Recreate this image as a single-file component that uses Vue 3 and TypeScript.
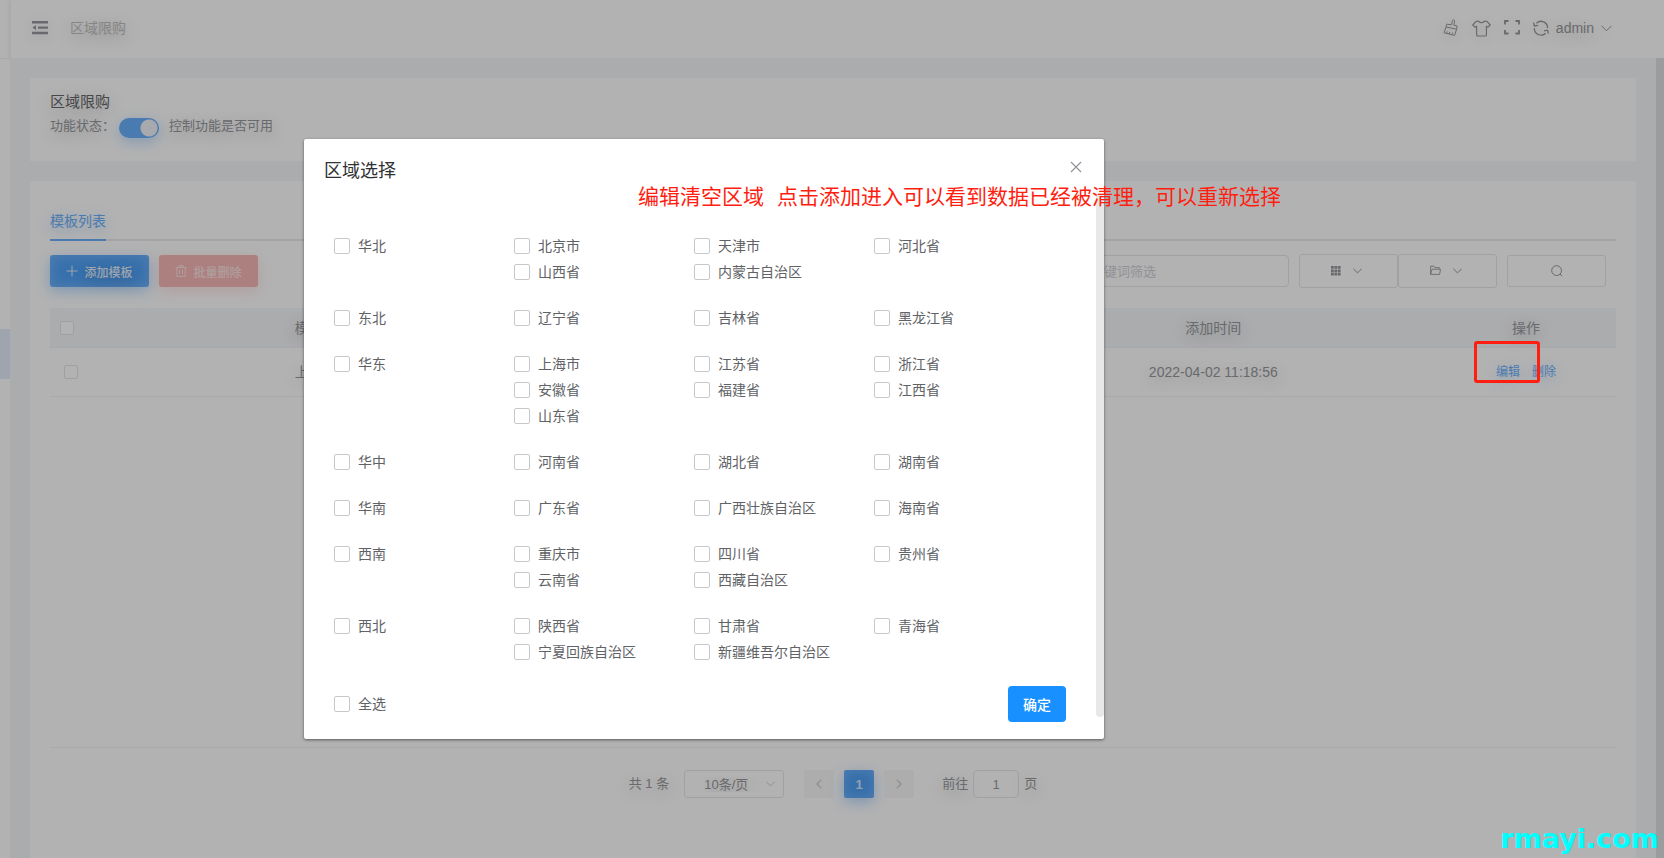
<script setup lang="ts">
import { ref } from 'vue'

interface Region {
  name: string
  provinces: string[]
}

const regions: Region[] = [
  { name: '华北', provinces: ['北京市', '天津市', '河北省', '山西省', '内蒙古自治区'] },
  { name: '东北', provinces: ['辽宁省', '吉林省', '黑龙江省'] },
  { name: '华东', provinces: ['上海市', '江苏省', '浙江省', '安徽省', '福建省', '江西省', '山东省'] },
  { name: '华中', provinces: ['河南省', '湖北省', '湖南省'] },
  { name: '华南', provinces: ['广东省', '广西壮族自治区', '海南省'] },
  { name: '西南', provinces: ['重庆市', '四川省', '贵州省', '云南省', '西藏自治区'] },
  { name: '西北', provinces: ['陕西省', '甘肃省', '青海省', '宁夏回族自治区', '新疆维吾尔自治区'] },
]

const selected = ref<string[]>([])
const enabled = ref(true)
const keyword = ref('')
const pageSize = ref('10')
const jumpTo = ref('1')
</script>

<template>
  <div class="app">
    <aside class="sidebar">
      <div class="sidebar-logo"></div>
      <div class="sidebar-active"></div>
    </aside>

    <div class="shell">
      <header class="topbar">
        <button class="plain" aria-label="折叠菜单">
          <svg width="16" height="14" viewBox="0 0 16 14" fill="currentColor">
            <path d="M0 0h16v2.4H0zM6 5.4h10v2.4H6zM0 10.8h16v2.4H0zM0.4 6.6L4 4.2v4.8z" />
          </svg>
        </button>
        <span class="crumb">区域限购</span>
        <div class="tools">
          <button class="plain" aria-label="清除缓存">
            <svg width="16" height="18" viewBox="0 0 16 18" fill="none" stroke="currentColor" stroke-width="1" stroke-linejoin="round">
              <path d="M8.6 5.8L9.4 1.6Q9.8.6 10.8.9T11.6 2.2L10.8 6.2L14.2 7L13.6 10.2L3 8L3.8 5.2L8.6 5.8M3 8L1 13.8L11.6 16.4L13.6 10.2M3.6 14.4L4.2 12.4M6.2 15L6.8 13M9 15.6L9.6 13.6" />
            </svg>
          </button>
          <button class="plain" aria-label="主题">
            <svg width="19" height="17" viewBox="0 0 19 17" fill="none" stroke="currentColor" stroke-width="1.2" stroke-linejoin="round">
              <path d="M6.2 1Q9.5 4.4 12.8 1L15.2 1.6L18.2 5L16 7.2L14.4 6.2V15Q14.4 16 13.4 16H5.6Q4.6 16 4.6 15V6.2L3 7.2L.8 5L3.8 1.6Z" />
            </svg>
          </button>
          <button class="plain" aria-label="全屏">
            <svg width="16" height="16" viewBox="0 0 16 16" fill="none" stroke="currentColor" stroke-width="1.8">
              <path d="M1 4.5V1H4.5M11.5 1H15V4.5M15 10V13.5H11.5M4.5 13.5H1V10" />
            </svg>
          </button>
          <button class="plain" aria-label="刷新">
            <svg width="16" height="16" viewBox="0 0 16 16" fill="none" stroke="currentColor" stroke-width="1.3">
              <path d="M3.4 3.2A6.6 6.6 0 0 1 14.6 8M12.6 13.2A6.6 6.6 0 0 1 1.4 8" />
              <path d="M.6 2.6L1.4 6L5 5.4M15.4 13.6L14.6 10.2L11 10.8" />
            </svg>
          </button>
          <button class="plain user">
            admin
            <svg width="11" height="7" viewBox="0 0 11 7" fill="none" stroke="currentColor"><path d="M.5.8L5.5 5.8L10.5.8" /></svg>
          </button>
        </div>
      </header>

      <main class="content">
        <section class="card status-card">
          <h1>区域限购</h1>
          <div class="status">
            <label for="feature">功能状态：</label>
            <input id="feature" v-model="enabled" class="switch" type="checkbox" role="switch" />
            <span class="hint">控制功能是否可用</span>
          </div>
        </section>

        <section class="card list-card">
          <nav class="tabs"><a class="tab" href="#list">模板列表</a></nav>

          <div class="toolbar">
            <button class="btn primary">
              <svg width="12" height="12" viewBox="0 0 12 12" fill="none" stroke="currentColor"><path d="M6 .5V11.5M.5 6H11.5" /></svg>
              添加模板
            </button>
            <button class="btn danger">
              <svg width="12" height="12" viewBox="0 0 12 12" fill="none" stroke="currentColor"><path d="M.5 2.5H11.5M4 2.5V.7H8V2.5M1.8 2.5V11.3H10.2V2.5M4.5 4.8V9M7.5 4.8V9" /></svg>
              批量删除
            </button>
            <div class="filters">
              <input v-model="keyword" class="search" type="text" placeholder="关键词筛选" aria-label="关键词筛选" />
              <div class="pair">
                <button class="ghost tall" aria-label="列设置">
                  <svg width="10" height="10" viewBox="0 0 10 10" fill="currentColor">
                    <path d="M0 0h2.8v2.8H0zM3.4 0h2.8v2.8H3.4zM6.8 0h2.8v2.8H6.8zM0 3.4h2.8v2.8H0zM3.4 3.4h2.8v2.8H3.4zM6.8 3.4h2.8v2.8H6.8zM0 6.8h2.8v2.8H0zM3.4 6.8h2.8v2.8H3.4zM6.8 6.8h2.8v2.8H6.8z" />
                  </svg>
                  <svg width="9" height="6" viewBox="0 0 9 6" fill="none" stroke="currentColor"><path d="M.4.8L4.5 4.9L8.6.8" /></svg>
                </button>
                <button class="ghost tall" aria-label="导出">
                  <svg width="11" height="12" viewBox="0 0 11 12" fill="none" stroke="currentColor" stroke-width=".9"><path d="M.6 9.4V1.2H4L5 2.6H9.2V4.2M.6 9.4L2 4.2H10.5L9.6 9.4Z" /></svg>
                  <svg width="9" height="6" viewBox="0 0 9 6" fill="none" stroke="currentColor"><path d="M.4.8L4.5 4.9L8.6.8" /></svg>
                </button>
              </div>
              <button class="ghost" aria-label="搜索">
                <svg width="12" height="12" viewBox="0 0 12 12" fill="none" stroke="currentColor"><circle cx="5.6" cy="5.6" r="4.9" /><path d="M9 9L11 11.2" /></svg>
              </button>
            </div>
          </div>

          <div class="table-area">
            <table>
              <colgroup>
                <col class="col-check" />
                <col />
                <col />
                <col />
                <col class="col-actions" />
              </colgroup>
              <thead>
                <tr>
                  <th class="check-cell"><input type="checkbox" class="box small" aria-label="选择全部" /></th>
                  <th>模板名称</th>
                  <th></th>
                  <th>添加时间</th>
                  <th>操作</th>
                </tr>
              </thead>
              <tbody>
                <tr>
                  <td class="check-cell row-check"><input type="checkbox" class="box small" aria-label="选择此行" /></td>
                  <td>上海模板</td>
                  <td></td>
                  <td>2022-04-02 11:18:56</td>
                  <td>
                    <div class="actions"><a href="#edit">编辑</a><a href="#delete">删除</a></div>
                  </td>
                </tr>
              </tbody>
            </table>
          </div>

          <footer class="pagination">
            <span class="total">共 1 条</span>
            <span class="size">
              <select v-model="pageSize" aria-label="每页条数">
                <option value="10">10条/页</option>
              </select>
              <svg width="9" height="6" viewBox="0 0 9 6" fill="none" stroke="currentColor"><path d="M.4.8L4.5 4.9L8.6.8" /></svg>
            </span>
            <div class="pager">
              <button aria-label="上一页">
                <svg width="6" height="10" viewBox="0 0 6 10" fill="none" stroke="currentColor" stroke-width="1.5"><path d="M5.2.8L1 5L5.2 9.2" /></svg>
              </button>
              <button class="current">1</button>
              <button aria-label="下一页">
                <svg width="6" height="10" viewBox="0 0 6 10" fill="none" stroke="currentColor" stroke-width="1.5"><path d="M.8.8L5 5L.8 9.2" /></svg>
              </button>
            </div>
            <label class="jump">前往<input v-model="jumpTo" type="text" />页</label>
          </footer>
        </section>
      </main>
      <div class="page-scroll"></div>
    </div>

    <div class="mask"></div>

    <div class="dialog" role="dialog" aria-labelledby="dialog-title">
      <header class="dialog-head">
        <h2 id="dialog-title">区域选择</h2>
        <button class="close" aria-label="关闭">
          <svg width="12" height="12" viewBox="0 0 12 12" fill="none" stroke="currentColor" stroke-width="1.2"><path d="M1 1L11 11M11 1L1 11" /></svg>
        </button>
      </header>
      <div class="dialog-body">
        <div v-for="region in regions" :key="region.name" class="region">
          <label class="option"><input v-model="selected" :value="region.name" type="checkbox" class="box" />{{ region.name }}</label>
          <div class="provinces">
            <label v-for="province in region.provinces" :key="province" class="option">
              <input v-model="selected" :value="province" type="checkbox" class="box" />{{ province }}
            </label>
          </div>
        </div>
        <div class="dialog-foot">
          <label class="option"><input type="checkbox" class="box" />全选</label>
          <button class="confirm">确定</button>
        </div>
        <div class="dialog-scroll"></div>
      </div>
    </div>

    <p class="note"><span>编辑清空区域</span><span>点击添加进入可以看到数据已经被清理，可以重新选择</span></p>
    <div class="marker"></div>
    <div class="watermark">rmayi.com</div>
  </div>
</template>

<style>
body {
  margin: 0;
}
</style>

<style scoped>
* {
  box-sizing: border-box;
}

.app {
  position: relative;
  display: flex;
  min-height: 100vh;
  overflow: hidden;
  background: #fff;
  color: #96989c;
  font-family: "Liberation Sans", "Noto Sans CJK SC", sans-serif;
  font-size: 14px;
  line-height: 20px;
}

button,
input,
select {
  margin: 0;
  font-family: inherit;
  color: inherit;
}

button {
  cursor: pointer;
  text-shadow: inherit;
}

a {
  text-decoration: none;
}

svg {
  display: block;
  flex: none;
}

.sidebar {
  flex: none;
  width: 10px;
}

.sidebar-logo {
  height: 59px;
  border-bottom: 1px solid #f1f1f1;
}

.sidebar-active {
  height: 50px;
  margin-top: 270px;
  background: #e2edfb;
}

.shell {
  position: relative;
  display: flex;
  flex: 1;
  flex-direction: column;
  min-width: 0;
  text-shadow: 0 4px 16px rgba(0, 0, 0, 0.26);
}

.topbar {
  display: flex;
  align-items: center;
  height: 58px;
  padding: 0 52px 2px 21px;
  border-left: 1px solid #f6f6f6;
  box-shadow: 0 1px 4px rgba(0, 21, 41, 0.12);
}

.plain {
  display: flex;
  align-items: center;
  padding: 0;
  border: 0;
  background: none;
  font-size: 14px;
}

.plain svg {
  filter: drop-shadow(0 3px 6px rgba(0, 0, 0, 0.12));
}

.crumb {
  margin-left: 22px;
  color: #bfbfbf;
}

.tools {
  display: flex;
  align-items: center;
  gap: 13px;
  margin-left: auto;
}

.user {
  gap: 7px;
  margin-left: -6px;
}

.content {
  display: flex;
  flex: 1;
  flex-direction: column;
  gap: 20px;
  padding: 20px 28px 0 20px;
  background: #f5f7f9;
}

.card {
  background: #fff;
}

.status-card {
  height: 83px;
  padding: 14px 20px;
}

h1 {
  margin: 0;
  color: #646669;
  font-size: 15px;
  font-weight: 400;
  line-height: 20px;
}

.status {
  display: flex;
  align-items: center;
  height: 28px;
  font-size: 13px;
}

.switch {
  width: 40px;
  height: 20px;
  margin: 4px 10px 0 4px;
  border-radius: 10px;
  appearance: none;
  background: radial-gradient(circle at 30px 10px, #f0f3f8 8px, #69b1fd 9px);
  box-shadow: 0 4px 14px rgba(64, 158, 255, 0.35);
}

.list-card {
  display: flex;
  flex: 1;
  flex-direction: column;
  padding: 20px 20px 0;
}

.tabs {
  display: flex;
  height: 40px;
  border-bottom: 2px solid #e9ebf0;
}

.tab {
  height: 40px;
  border-bottom: 2px solid #6cb0fa;
  color: #6cb0fa;
  line-height: 40px;
  text-shadow: 0 4px 14px rgba(64, 158, 255, 0.4);
}

.toolbar {
  display: flex;
  align-items: center;
  height: 34px;
  gap: 10px;
  margin: 13px 10px 20px 0;
}

.btn {
  display: flex;
  align-items: center;
  justify-content: center;
  gap: 6px;
  width: 99px;
  height: 32px;
  border: 0;
  border-radius: 3px;
  font-size: 12px;
  font-weight: 500;
}

.primary {
  background: #50a2f8;
  box-shadow: 0 4px 14px rgba(64, 158, 255, 0.4), inset 0 0 14px rgba(255, 255, 255, 0.24);
  color: #e2ecf8;
}

.danger {
  background: #f8b8b8;
  box-shadow: 0 4px 14px rgba(245, 108, 108, 0.2);
  color: #fbe3e3;
  text-shadow: none;
}

.filters {
  display: flex;
  align-items: center;
  gap: 10px;
  margin-left: auto;
}

.search {
  width: 214px;
  height: 32px;
  padding: 0 15px;
  border: 1px solid #e5e7ec;
  border-radius: 4px;
  background: none;
  font-size: 13px;
}

.search::placeholder {
  color: #cfd1d6;
}

.pair {
  display: flex;
}

.ghost {
  display: flex;
  align-items: center;
  justify-content: center;
  gap: 14px;
  width: 99px;
  height: 32px;
  padding: 0;
  border: 1px solid #e5e7ec;
  border-radius: 3px;
  background: none;
}

.tall {
  height: 34px;
  padding-right: 4px;
  gap: 12px;
}

.table-area {
  flex: 1;
  border-bottom: 1px solid #f1f2f5;
}

table {
  width: 100%;
  border-spacing: 0;
  table-layout: fixed;
}

.col-check {
  width: 50px;
}

.col-actions {
  width: 180px;
}

th,
td {
  padding: 0;
  border-bottom: 1px solid #f1f2f5;
  text-align: center;
}

th {
  height: 40px;
  background: #f5f6f8;
  font-weight: 400;
}

td {
  height: 49px;
}

.check-cell {
  padding-left: 10px;
  text-align: left;
}

.row-check {
  padding-left: 14px;
}

.actions {
  display: flex;
  justify-content: center;
  gap: 12px;
  font-size: 12px;
}

.actions a {
  color: #6cb0fa;
  text-shadow: 0 4px 14px rgba(64, 158, 255, 0.4);
}

.box {
  display: block;
  flex: none;
  width: 16px;
  height: 16px;
  border: 1px solid #c8c9cc;
  border-radius: 2px;
  appearance: none;
  background: #fff;
}

.small {
  width: 14px;
  height: 14px;
  border-color: #e3e5ea;
}

.pagination {
  display: flex;
  align-items: center;
  justify-content: center;
  height: 110px;
  padding-bottom: 38px;
  font-size: 13px;
}

.size {
  display: flex;
  align-items: center;
  justify-content: flex-end;
  width: 100px;
  height: 28px;
  margin: 0 20px 0 15px;
  padding-right: 8px;
  border: 1px solid #e5e7ec;
  border-radius: 3px;
  color: #c8cbd0;
}

.size select {
  flex: 1;
  height: 26px;
  padding: 0 0 0 19px;
  border: 0;
  appearance: none;
  background: none;
  color: #96989c;
  font-size: 13px;
  text-shadow: inherit;
}

.pager {
  display: flex;
  gap: 10px;
}

.pager button {
  display: flex;
  align-items: center;
  justify-content: center;
  width: 30px;
  height: 28px;
  padding: 0;
  border: 0;
  border-radius: 2px;
  background: #f8f8f9;
  color: #d0d2d7;
  font-size: 13px;
  font-weight: 700;
}

.pager .current {
  background: #50a2f8;
  box-shadow: 0 4px 14px rgba(64, 158, 255, 0.4), inset 0 0 12px rgba(255, 255, 255, 0.2);
  color: #d5e5f7;
}

.jump {
  display: flex;
  align-items: center;
  margin-left: 28px;
}

.jump input {
  width: 46px;
  height: 28px;
  margin: 0 5px;
  padding: 0;
  border: 1px solid #e5e7ec;
  border-radius: 4px;
  background: none;
  font-size: 13px;
  text-align: center;
}

.page-scroll {
  position: absolute;
  top: 58px;
  right: 0;
  bottom: 0;
  width: 8px;
  background: #dfe0e2;
}

.mask {
  position: absolute;
  inset: 0;
  background: rgba(0, 0, 0, 0.3);
}

.dialog {
  position: absolute;
  top: 139px;
  left: 304px;
  width: 800px;
  border-radius: 2px;
  background: #fff;
  box-shadow: 0 1px 3px rgba(0, 0, 0, 0.5);
  color: #606266;
}

.dialog-head {
  display: flex;
  align-items: center;
  justify-content: space-between;
  height: 54px;
  padding: 10px 22px 0 20px;
}

h2 {
  margin: 0;
  color: #303133;
  font-size: 18px;
  font-weight: 400;
  line-height: 24px;
}

.close {
  padding: 0 0 8px;
  border: 0;
  background: none;
  color: #909399;
}

.dialog-body {
  position: relative;
  padding: 40px 38px 17px 30px;
}

.region {
  display: flex;
  margin-bottom: 20px;
}

.option {
  display: flex;
  align-items: center;
  gap: 8px;
  width: 180px;
  height: 26px;
}

.provinces {
  display: flex;
  flex: 1;
  flex-wrap: wrap;
  max-width: 540px;
}

.dialog-foot {
  display: flex;
  align-items: center;
  justify-content: space-between;
  height: 37px;
}

.confirm {
  width: 58px;
  height: 36px;
  padding: 0;
  border: 0;
  border-radius: 4px;
  background: #1890ff;
  color: #fff;
  font-size: 14px;
  font-weight: 500;
}

.dialog-scroll {
  position: absolute;
  top: 0;
  right: 0;
  bottom: 22px;
  width: 8px;
  border-radius: 4px;
  background: #e8e8e8;
}

.note {
  position: absolute;
  top: 184px;
  left: 638px;
  display: flex;
  gap: 13px;
  margin: 0;
  color: #ff1e10;
  font-size: 21px;
  line-height: 26px;
  white-space: nowrap;
}

.marker {
  position: absolute;
  top: 341px;
  right: 124px;
  width: 66px;
  height: 42px;
  border: 3px solid #ff1e10;
  border-radius: 3px;
}

.watermark {
  position: absolute;
  right: 5px;
  bottom: 3px;
  color: #0ff;
  font-family: "DejaVu Sans", sans-serif;
  font-size: 27px;
  font-weight: 700;
  line-height: 32px;
}
</style>
